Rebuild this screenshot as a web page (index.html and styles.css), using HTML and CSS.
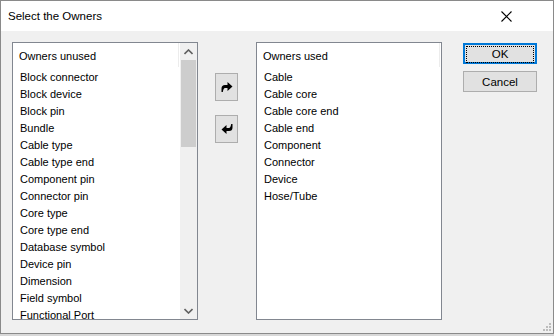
FILE: index.html
```html
<!DOCTYPE html>
<html lang="en">

<head>
    <meta charset="UTF-8">
    <title>Select the Owners</title>
    <link rel="stylesheet" href="styles.css">
</head>

<body>
    <div class="window">
        <div class="titlebar">
            <span class="title">Select the Owners</span>
            <svg class="close" width="11" height="11" viewBox="0 0 11 11">
                <path d="M0.5 0.5 L10.5 10.5 M10.5 0.5 L0.5 10.5" stroke="#000" stroke-width="1.1" fill="none" />
            </svg>
        </div>

        <div class="content">
            <div class="listbox">
                <div class="header">Owners unused</div>
                <ul class="items">
                    <li>Block connector</li>
                    <li>Block device</li>
                    <li>Block pin</li>
                    <li>Bundle</li>
                    <li>Cable type</li>
                    <li>Cable type end</li>
                    <li>Component pin</li>
                    <li>Connector pin</li>
                    <li>Core type</li>
                    <li>Core type end</li>
                    <li>Database symbol</li>
                    <li>Device pin</li>
                    <li>Dimension</li>
                    <li>Field symbol</li>
                    <li>Functional Port</li>
                </ul>
                <div class="scrollbar">
                    <div class="arrow">
                        <svg width="9" height="6" viewBox="0 0 9 6">
                            <path d="M0.5 5 L4.5 1 L8.5 5" stroke="#606060" stroke-width="1.6" fill="none" />
                        </svg>
                    </div>
                    <div class="track">
                        <div class="thumb"></div>
                    </div>
                    <div class="arrow">
                        <svg width="9" height="6" viewBox="0 0 9 6">
                            <path d="M0.5 1 L4.5 5 L8.5 1" stroke="#606060" stroke-width="1.6" fill="none" />
                        </svg>
                    </div>
                </div>
            </div>

            <div class="movers">
                <button class="move" title="Add">
                    <svg width="12" height="10" viewBox="0 0 12 10">
                        <path d="M0.5 10 L0.5 6.5 Q0.5 3 4 3 L6.5 3 L6.5 0 L11.5 4.5 L6.5 9 L6.5 6 L4 6 Q2.5 6 1.8 10 Z" fill="#000" />
                    </svg>
                </button>
                <button class="move" title="Remove">
                    <svg width="12" height="10" viewBox="0 0 12 10">
                        <path d="M11.5 0 L11.5 3.5 Q11.5 7 8 7 L5.5 7 L5.5 10 L0.5 5.5 L5.5 1 L5.5 4 L8 4 Q9.5 4 10.2 0 Z" fill="#000" />
                    </svg>
                </button>
            </div>

            <div class="listbox used">
                <div class="header">Owners used</div>
                <ul class="items">
                    <li>Cable</li>
                    <li>Cable core</li>
                    <li>Cable core end</li>
                    <li>Cable end</li>
                    <li>Component</li>
                    <li>Connector</li>
                    <li>Device</li>
                    <li>Hose/Tube</li>
                </ul>
            </div>

            <div class="actions">
                <button class="btn default"><span class="focus">OK</span></button>
                <button class="btn">Cancel</button>
            </div>
        </div>

        <svg class="grip" width="10" height="10" viewBox="0 0 10 10">
            <rect x="7" y="1" width="2" height="2" fill="#bcbcbc" />
            <rect x="4" y="4" width="2" height="2" fill="#bcbcbc" />
            <rect x="7" y="4" width="2" height="2" fill="#bcbcbc" />
            <rect x="1" y="7" width="2" height="2" fill="#bcbcbc" />
            <rect x="4" y="7" width="2" height="2" fill="#bcbcbc" />
            <rect x="7" y="7" width="2" height="2" fill="#bcbcbc" />
        </svg>
    </div>
</body>

</html>
```

FILE: styles.css
```css
body {
    margin: 0;
    background-color: #d8d8d8;
    font-family: "Liberation Sans", Arial, sans-serif;
    font-size: 11px;
    color: #000;
}

.window {
    position: relative;
    box-sizing: border-box;
    width: 554px;
    height: 334px;
    border: 1px solid #8a8a8a;
    background-color: #f0f0f0;
}

.titlebar {
    display: flex;
    align-items: center;
    justify-content: space-between;
    height: 30px;
    padding: 0 41px 0 7px;
    background-color: #fff;
}

.title {
    font-size: 11.5px;
    padding-bottom: 1px;
}

.content {
    display: flex;
    align-items: flex-start;
    padding: 11px 0 0 11px;
}

.listbox {
    position: relative;
    box-sizing: border-box;
    width: 186px;
    height: 278px;
    border: 1px solid #828790;
    background-color: #fff;
    overflow: hidden;
}

.header {
    box-sizing: border-box;
    height: 24px;
    line-height: 24px;
    padding: 1px 0 0 6px;
    border-right: 1px solid #ececec;
    width: 166px;
}

.used .header {
    width: 183px;
}

.items {
    list-style: none;
    margin: 1px 0 0;
    padding: 0 0 0 7px;
}

.items li {
    height: 17px;
    line-height: 18px;
    white-space: nowrap;
}

.scrollbar {
    position: absolute;
    top: 0;
    right: 0;
    bottom: 0;
    width: 17px;
    display: flex;
    flex-direction: column;
    background-color: #f0f0f0;
}

.arrow {
    height: 17px;
    display: flex;
    align-items: center;
    justify-content: center;
}

.track {
    flex: 1;
}

.thumb {
    height: 87px;
    margin: 0 1px;
    background-color: #cdcdcd;
}

.movers {
    display: flex;
    flex-direction: column;
    gap: 14px;
    margin: 31px 18px 0 17px;
}

.move {
    box-sizing: border-box;
    width: 23px;
    height: 28px;
    padding: 0;
    border: 1px solid #adadad;
    background-color: #e1e1e1;
    display: flex;
    align-items: center;
    justify-content: center;
}

.actions {
    display: flex;
    flex-direction: column;
    gap: 7px;
    margin: 1px 0 0 21px;
}

.btn {
    box-sizing: border-box;
    width: 74px;
    height: 21px;
    padding: 0;
    border: 1px solid #adadad;
    background-color: #e1e1e1;
    font-family: "Liberation Sans", Arial, sans-serif;
    font-size: 11.5px;
    color: #000;
}

.btn.default {
    border: 2px solid #0078d7;
    padding: 1px;
}

.focus {
    display: block;
    height: 15px;
    line-height: 15px;
    border: 1px dotted #000;
}

.grip {
    position: absolute;
    right: 1px;
    bottom: 1px;
}
```
